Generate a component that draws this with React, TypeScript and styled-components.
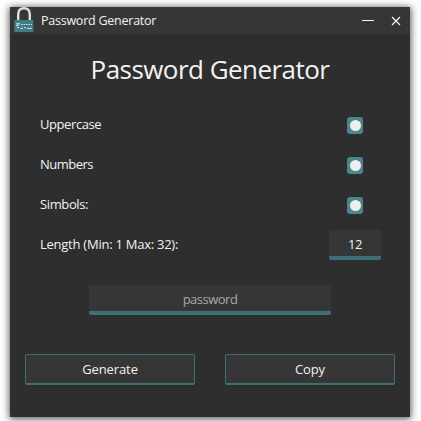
import React from "react";
import styled, { createGlobalStyle } from "styled-components";

const GlobalStyle = createGlobalStyle`
  * { box-sizing: border-box; }
  body { margin: 0; background: #fff; overflow: hidden; }
  button, input { font: inherit; color: inherit; }
`;

const Desktop = styled.div`
  width: 421px;
  height: 421px;
  padding: 7px 11px 4px 10px;
  overflow: hidden;
  font-family: "Open Sans", "Noto Sans", sans-serif;
  font-size: 13px;
  color: #f2f2f2;
`;

const Window = styled.main`
  display: flex;
  flex-direction: column;
  width: 400px;
  height: 410px;
  background: #2e2e2e;
  box-shadow: 0 1px 7px 1px rgba(0, 0, 0, 0.65);
`;

const TitleBar = styled.header`
  display: flex;
  align-items: center;
  height: 27px;
  padding-left: 4px;
  background: #363636;
`;

const AppName = styled.span`
  flex: 1;
  padding-left: 7px;
  font-size: 12.5px;
  line-height: 27px;
  letter-spacing: -0.24px;
`;

const WindowControl = styled.button`
  display: flex;
  align-items: center;
  justify-content: center;
  width: 28px;
  height: 27px;
  padding: 0;
  border: 0;
  background: none;
`;

const Heading = styled.h1`
  margin: 15px 0 0;
  height: 41px;
  font-size: 26px;
  font-weight: 400;
  line-height: 41px;
  letter-spacing: -0.54px;
  text-align: center;
`;

const Options = styled.div`
  display: grid;
  grid-template-rows: repeat(4, 40px);
  margin-top: 15px;
  padding: 0 29px 0 30px;
`;

const OptionRow = styled.label`
  display: flex;
  align-items: center;
  justify-content: space-between;
`;

const OptionLabel = styled.span<{ $spacing: number }>`
  padding-bottom: 2px;
  letter-spacing: ${(p) => p.$spacing}px;
  line-height: 20px;
`;

const ControlCell = styled.span`
  display: flex;
  justify-content: center;
  width: 52px;
`;

const Toggle = styled.span`
  display: flex;
  align-items: center;
  justify-content: center;
  width: 16px;
  height: 17px;
  border-radius: 3px;
  background: #4b868e;

  &::after {
    content: "";
    width: 11px;
    height: 11px;
    border-radius: 50%;
    background: #f0f0f0;
  }
`;

const Field = styled.input`
  display: block;
  height: 30px;
  padding: 1px 0 0;
  border: 0;
  border-bottom: 4px solid #3f6f76;
  border-radius: 2px;
  background: #363636;
  text-align: center;
  outline: none;
`;

const LengthField = styled(Field)`
  width: 52px;
  letter-spacing: -0.4px;
`;

const PasswordField = styled(Field)`
  width: 242px;
  margin: 20px 0 0 79px;
  letter-spacing: -0.5px;

  &::placeholder {
    color: #a9a9a9;
    opacity: 1;
  }
`;

const Actions = styled.div`
  display: flex;
  gap: 30px;
  margin: 39px 15px 0;
`;

const ActionButton = styled.button`
  flex: 1;
  height: 31px;
  padding: 0;
  border: 1px solid #3f6f76;
  border-bottom-width: 2px;
  border-radius: 2px;
  background: #363636;
  line-height: 28px;
  letter-spacing: -0.1px;
`;

const LockIcon = () => (
  <svg width="20" height="27" viewBox="0 0 20 27">
    <path d="M4.2 14V7.5C4.2 3.5 6.5 1.2 10 1.2S15.8 3.5 15.8 7.5V14" fill="none" stroke="#dedede" strokeWidth="2.4" />
    <rect x="0.3" y="13" width="19" height="12" fill="#417b84" />
    <path d="M2 16.8h4M2 18.3h3" stroke="#e4eeee" strokeWidth="1" />
    <path d="M7 17.5h11" stroke="#d5e4e5" strokeWidth="1" strokeDasharray="1.5 1" />
    <path d="M3 20.5h2M6 21.3h3M10 20.7h2M13 21.3h5" stroke="#d5e4e5" strokeWidth="1" />
  </svg>
);

const options = [
  { label: "Uppercase", spacing: -0.42 },
  { label: "Numbers", spacing: -0.5 },
  { label: "Simbols:", spacing: -0.38 },
];

export default function App() {
  return (
    <Desktop>
      <GlobalStyle />
      <Window>
        <TitleBar>
          <LockIcon />
          <AppName>Password Generator</AppName>
          <WindowControl aria-label="Minimize">
            <svg width="12" height="12" viewBox="0 0 12 12">
              <path d="M0 5.5h12" stroke="#f4f4f4" />
            </svg>
          </WindowControl>
          <WindowControl aria-label="Close">
            <svg width="10" height="10" viewBox="0 0 10 10">
              <path d="M1 1l8 8M9 1L1 9" stroke="#f4f4f4" strokeWidth="1.2" />
            </svg>
          </WindowControl>
        </TitleBar>
        <Heading>Password Generator</Heading>
        <Options>
          {options.map(({ label, spacing }) => (
            <OptionRow key={label}>
              <OptionLabel $spacing={spacing}>{label}</OptionLabel>
              <ControlCell>
                <Toggle />
              </ControlCell>
            </OptionRow>
          ))}
          <OptionRow>
            <OptionLabel $spacing={-0.25}>Length (Min: 1 Max: 32):</OptionLabel>
            <LengthField defaultValue="12" />
          </OptionRow>
        </Options>
        <PasswordField placeholder="password" />
        <Actions>
          <ActionButton>Generate</ActionButton>
          <ActionButton>Copy</ActionButton>
        </Actions>
      </Window>
    </Desktop>
  );
}
